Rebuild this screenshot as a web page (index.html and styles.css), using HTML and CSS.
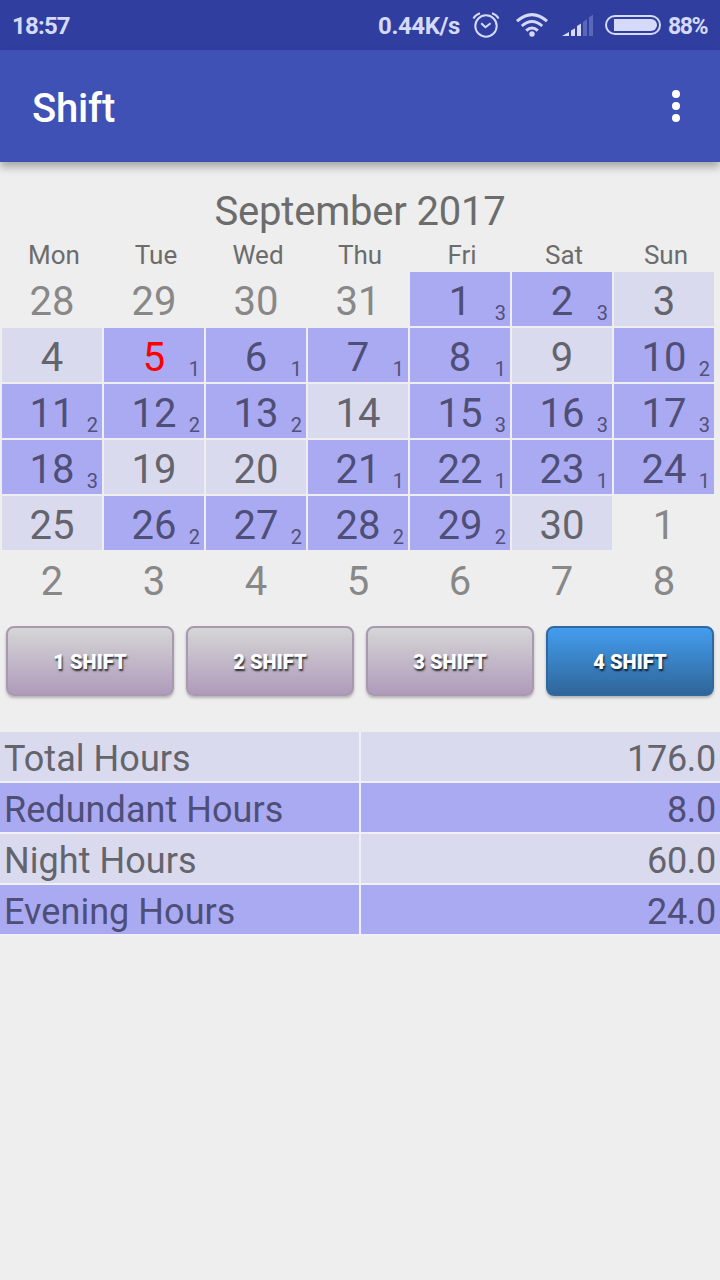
FILE: index.html
```html
<!DOCTYPE html>
<html lang="en">
    <head>
        <meta charset="UTF-8">
        <title>Shift</title>
        <link rel="stylesheet" href="styles.css">
    </head>
    <body>
        <div class="status">
            <span class="clock">18:57</span>
            <span class="speed">0.44K/s</span>
            <svg class="alarm" width="28" height="28" viewBox="0 0 28 28">
                <circle cx="14" cy="15" r="10.7"/>
                <path d="M9.2 12.2 L13.5 16.2 L18.6 12.2"/>
                <path d="M1.4 7.4 Q3.6 3.6 8 2.2 M26.6 7.4 Q24.4 3.6 20 2.2"/>
            </svg>
            <svg class="wifi" width="34" height="26" viewBox="0 0 34 26">
                <path d="M2 9.2 Q17 -4 32 9.2"/>
                <path d="M6.8 14 Q17 5 27.2 14"/>
                <path d="M11.2 18.6 Q17 13.4 22.8 18.6"/>
                <circle cx="17" cy="22" r="2.7"/>
            </svg>
            <svg class="signal" width="32" height="22" viewBox="0 0 32 22">
                <path d="M0 22 L7 18 V22 Z M9 16.5 L13 14.3 V22 H9 Z M15 12 L19 9.5 V22 H15 Z"/>
                <path class="off" d="M21 8 L25 5 V22 H21 Z M27 3.5 L31 0.5 V22 H27 Z"/>
            </svg>
            <svg class="battery" width="56" height="20" viewBox="0 0 56 20">
                <rect class="case" x="1" y="1" width="54" height="18" rx="9"/>
                <path d="M9 4 H46 A6 6 0 0 1 46 16 H9 Z"/>
            </svg>
            <span class="percent">88%</span>
        </div>
        <div class="header">
            <h1>Shift</h1>
            <svg class="menu" width="8" height="32" viewBox="0 0 8 32">
                <circle cx="4" cy="4" r="4"/>
                <circle cx="4" cy="16" r="4"/>
                <circle cx="4" cy="28" r="4"/>
            </svg>
        </div>

        <div class="main">
            <h2>September 2017</h2>
            <div class="week">
                <span>Mon</span>
                <span>Tue</span>
                <span>Wed</span>
                <span>Thu</span>
                <span>Fri</span>
                <span>Sat</span>
                <span>Sun</span>
            </div>
            <div class="days">
                <div class="other">28</div>
                <div class="other">29</div>
                <div class="other">30</div>
                <div class="other">31</div>
                <div class="work">1<sub>3</sub></div>
                <div class="work">2<sub>3</sub></div>
                <div class="free">3</div>

                <div class="free">4</div>
                <div class="work today">5<sub>1</sub></div>
                <div class="work">6<sub>1</sub></div>
                <div class="work">7<sub>1</sub></div>
                <div class="work">8<sub>1</sub></div>
                <div class="free">9</div>
                <div class="work">10<sub>2</sub></div>

                <div class="work">11<sub>2</sub></div>
                <div class="work">12<sub>2</sub></div>
                <div class="work">13<sub>2</sub></div>
                <div class="free">14</div>
                <div class="work">15<sub>3</sub></div>
                <div class="work">16<sub>3</sub></div>
                <div class="work">17<sub>3</sub></div>

                <div class="work">18<sub>3</sub></div>
                <div class="free">19</div>
                <div class="free">20</div>
                <div class="work">21<sub>1</sub></div>
                <div class="work">22<sub>1</sub></div>
                <div class="work">23<sub>1</sub></div>
                <div class="work">24<sub>1</sub></div>

                <div class="free">25</div>
                <div class="work">26<sub>2</sub></div>
                <div class="work">27<sub>2</sub></div>
                <div class="work">28<sub>2</sub></div>
                <div class="work">29<sub>2</sub></div>
                <div class="free">30</div>
                <div class="other">1</div>

                <div class="other">2</div>
                <div class="other">3</div>
                <div class="other">4</div>
                <div class="other">5</div>
                <div class="other">6</div>
                <div class="other">7</div>
                <div class="other">8</div>
            </div>

            <div class="buttons">
                <button>1 SHIFT</button>
                <button>2 SHIFT</button>
                <button>3 SHIFT</button>
                <button class="active">4 SHIFT</button>
            </div>

            <div class="hours">
                <div class="free">Total Hours</div>
                <div class="free value">176.0</div>
                <div class="work">Redundant Hours</div>
                <div class="work value">8.0</div>
                <div class="free">Night Hours</div>
                <div class="free value">60.0</div>
                <div class="work">Evening Hours</div>
                <div class="work value">24.0</div>
            </div>
        </div>
    </body>
</html>
```
FILE: styles.css
```css
* {
    box-sizing: border-box;
}
body {
    margin: 0;
    min-height: 1280px;
    background-color: #eeeeee;
    font-family: Roboto, sans-serif;
}
.status {
    display: flex;
    align-items: center;
    height: 50px;
    padding: 0 12px;
    background-color: #303f9f;
    color: #d5dafa;
    font-size: 24px;
    font-weight: 700;
    line-height: 50px;
}
.status svg {
    flex: none;
    fill: #d5dafa;
}
.clock, .speed, .percent {
    padding-top: 2px;
    letter-spacing: -0.8px;
}
.speed {
    margin-left: auto;
    letter-spacing: -0.4px;
}
.status .alarm {
    margin-left: 12px;
    fill: none;
    stroke: #d5dafa;
    stroke-width: 2;
}
.wifi {
    margin-left: 15px;
}
.wifi path {
    fill: none;
    stroke: #d5dafa;
    stroke-width: 3;
}
.signal {
    margin-left: 13px;
}
.signal .off {
    fill: #5b67b8;
}
.battery {
    margin-left: 11px;
}
.battery .case {
    fill: none;
    stroke: #d5dafa;
    stroke-width: 2;
}
.percent {
    width: 40px;
    margin-left: 7px;
    padding-top: 3px;
    font-size: 23px;
    letter-spacing: -1.4px;
}
.header {
    display: flex;
    align-items: center;
    justify-content: space-between;
    height: 112px;
    padding: 0 40px 0 32px;
    background-color: #3f51b5;
    box-shadow: 0 5px 8px rgba(0, 0, 0, 0.3);
}
h1 {
    margin: 4px 0 0;
    color: white;
    font-size: 40px;
    font-weight: 500;
    letter-spacing: -0.2px;
}
.menu {
    fill: white;
}
.main {
    padding-top: 25px;
}
h2 {
    height: 48px;
    margin: 0;
    color: #6c6c6c;
    font-size: 40px;
    font-weight: 400;
    letter-spacing: -0.2px;
    line-height: 50px;
    text-align: center;
}
.week {
    display: grid;
    grid-template-columns: repeat(7, 102px);
    height: 37px;
    padding-left: 3px;
    color: #6c6c6c;
    font-size: 26px;
    line-height: 40px;
    text-align: center;
}
.days {
    display: grid;
    grid-template-columns: repeat(7, 100px);
    grid-auto-rows: 54px;
    gap: 2px;
    padding-left: 2px;
    font-size: 40px;
    line-height: 60px;
    text-align: center;
}
.days div {
    position: relative;
}
/* shift number in the corner of the day */
.days sub {
    position: absolute;
    right: 4px;
    bottom: 1px;
    color: #505078;
    font-size: 20px;
    line-height: 24px;
}
.other {
    color: #888888;
}
.free {
    background-color: #dadaef;
    color: #64646c;
}
.work {
    background-color: #aaaaf3;
    color: #4e4e76;
}
.today {
    color: #ff0000;
}
.buttons {
    display: flex;
    gap: 12px;
    padding: 20px 6px 36px;
}
button {
    flex: 1;
    height: 70px;
    padding: 2px 0 0;
    border: 2px solid #a898b0;
    border-radius: 8px;
    background: linear-gradient(#d6d6d6, #af9bbb);
    box-shadow: 0 2px 3px rgba(0, 0, 0, 0.25);
    color: white;
    font-family: Roboto, sans-serif;
    font-size: 20px;
    font-weight: 900;
    letter-spacing: 0.1px;
    text-shadow: 1px 2px 2px rgba(0, 0, 0, 0.8);
}
button.active {
    border-color: #30689f;
    background: linear-gradient(#449def, #2f6699);
}
.hours {
    display: grid;
    grid-template-columns: 1fr 1fr;
    grid-auto-rows: 49px;
    gap: 2px;
    padding-bottom: 2px;
    background-color: #f0f0f8;
    font-size: 36px;
    line-height: 55px;
}
.hours div {
    padding: 0 4px;
    letter-spacing: 0.05px;
}
.hours .value {
    letter-spacing: -0.3px;
    text-align: right;
}
```
